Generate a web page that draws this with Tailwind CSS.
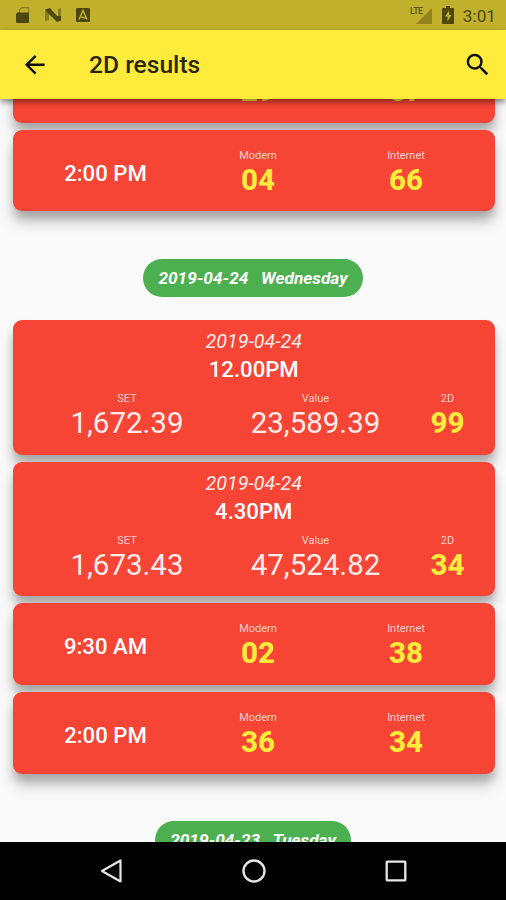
<!DOCTYPE html>
<html lang="en">
<head>
  <meta charset="UTF-8" />
  <meta name="viewport" content="width=device-width, initial-scale=1.0">
  <title>2D results</title>
  <script src="https://cdn.jsdelivr.net/npm/@tailwindcss/browser@4"></script>
</head>
<body class="bg-[#fafafa] h-[900px] flex flex-col overflow-hidden font-['Roboto',sans-serif]">
  <!-- status bar -->
  <div class="h-[30px] shrink-0 bg-[#c0b02c] flex items-center justify-between pl-[15px] pr-[10px] text-[#4e4710]">
    <div class="flex items-center gap-[13px]">
      <svg class="w-4 h-[18px]" viewBox="0 0 16 18"><path fill="none" stroke="#8a7e20" stroke-width="1.200" d="M4.500 7V4L7 1.700h6.500V7"/><path fill="currentColor" d="M4 6.500L3 6 1 8v8q0 1 1 1h11q1 0 1-1V6.500z"/></svg>
      <svg class="w-[19px] h-[18px]" viewBox="0 0 19 18"><path fill="currentColor" fill-opacity=".5" d="M1 4l4 1v9l-4 1zM14 3l3-1v12l-3 1z"/><path fill="currentColor" d="M1 3.500l5-1.500 7 8h4v4.500l-4 1.500-8-8z"/></svg>
      <svg class="w-[14px] h-[18px]" viewBox="0 0 14 18"><path fill="currentColor" d="M1 2h12q1 0 1 1v12q0 1-1 1H1q-1 0-1-1V3q0-1 1-1z"/><path fill="none" stroke="#c0b02c" stroke-width="1.500" d="M3 13.500L7 4.500l4 9M5 11l5 1"/></svg>
    </div>
    <div class="flex items-center">
      <svg class="w-[22px] h-[20px] mr-[10px]" viewBox="0 0 22 20"><path fill="#91841e" d="M22 3v16H6z"/><text x="0" y="9" font-size="9" font-weight="500" letter-spacing="-.6" fill="#5e5514" stroke="#c0b02c" stroke-width="2" paint-order="stroke">LTE</text></svg>
      <svg class="w-3 h-[18px] mr-[9px]" viewBox="0 0 12 18"><path fill="currentColor" d="M4 0h4v2h3q1 0 1 1v14q0 1-1 1H1q-1 0-1-1V3q0-1 1-1h3z"/><path fill="#c0b02c" d="M7 4.500L3 10.500h2.500v5L9.500 9H7z"/></svg>
      <span class="text-[17.2px] leading-[30px] pt-[2px]">3:01</span>
    </div>
  </div>

  <!-- app bar -->
  <header class="h-[69px] shrink-0 relative z-10 bg-[#ffeb3b] flex items-center pl-[20px] pr-[14px] shadow-[0_3px_6px_rgba(0,0,0,0.45)]">
    <svg class="w-[29.5px] h-[29.5px]" viewBox="0 0 24 24" fill="#111"><path d="M20 11H7.830l5.590-5.590L12 4l-8 8 8 8 1.410-1.410L7.830 13H20v-2z"/></svg>
    <h1 class="ml-[39.5px] pt-[1px] text-[24.6px] font-medium text-[#2b280a]">2D results</h1>
    <svg class="w-[29.5px] h-[29.5px] ml-auto" viewBox="0 0 24 24" fill="#111"><path d="M15.500 14h-.790l-.280-.270A6.471 6.471 0 0 0 16 9.500 6.500 6.500 0 1 0 9.500 16c1.610 0 3.090-.590 4.230-1.570l.270.280v.790l5 4.990L20.490 19l-4.990-5zm-6 0C7.010 14 5 11.990 5 9.500S7.010 5 9.500 5 14 7.010 14 9.500 11.990 14 9.500 14z"/></svg>
  </header>

  <main id="list" class="flex-1 min-h-0 overflow-hidden flex flex-col"></main>

  <!-- navigation bar -->
  <nav class="h-[58px] shrink-0 bg-black flex items-center justify-between pl-[100px] pr-[99px]">
    <svg class="w-[23px] h-6" viewBox="0 0 23 24" fill="none" stroke="#e6e6e6" stroke-width="2.200" stroke-linejoin="round"><path d="M20.500 1.500v21L2 12z"/></svg>
    <svg class="w-6 h-6" viewBox="0 0 24 24" fill="none" stroke="#e6e6e6" stroke-width="2.400"><circle cx="12" cy="12" r="10.500"/></svg>
    <svg class="w-[22px] h-[22px]" viewBox="0 0 22 22" fill="none" stroke="#e6e6e6" stroke-width="2.300"><rect x="1.700" y="1.700" width="18.600" height="18.600" rx=".5"/></svg>
  </nav>

  <script>
    const groups = [
      {
        rows: [
          { time: "9:30 AM", modern: "29", internet: "67" },
          { time: "2:00 PM", modern: "04", internet: "66" }
        ]
      },
      {
        date: "2019-04-24",
        day: "Wednesday",
        rows: [
          { date: "2019-04-24", time: "12.00PM", set: "1,672.39", value: "23,589.39", result: "99" },
          { date: "2019-04-24", time: "4.30PM", set: "1,673.43", value: "47,524.82", result: "34" },
          { time: "9:30 AM", modern: "02", internet: "38" },
          { time: "2:00 PM", modern: "36", internet: "34" }
        ]
      },
      { date: "2019-04-23", day: "Tuesday", rows: [] }
    ];

    const cardClass = "shrink-0 rounded-[9px] bg-[#f64435] text-white shadow-[0_8px_10px_-1px_rgba(0,0,0,0.22),0_12px_16px_0px_rgba(0,0,0,0.16)]";

    const cell = (label, value, style) => `
      <div class="text-center">
        <div class="pt-px text-[11px] leading-[14px] text-white/75">${label}</div>
        <div class="-mt-px text-[29.5px] leading-9 ${style}">${value}</div>
      </div>`;

    const plain = "text-white/90";
    const lucky = "font-extrabold text-[#ffeb3b]";

    const modernCard = r => `
      <div class="${cardClass} h-[81.7px] pt-[18px] grid grid-cols-[185px_120px_176px]">
        <div class="text-center text-[22.15px] leading-[51px] font-medium">${r.time}</div>
        ${cell("Modern", r.modern, lucky)}
        ${cell("Internet", r.internet, lucky)}
      </div>`;

    const setCard = r => `
      <div class="${cardClass} h-[134.5px] pt-[9px]">
        <div class="text-center text-[19.7px] leading-[26px] italic text-white/90">${r.date}</div>
        <div class="text-center text-[22.15px] leading-[29px] font-medium">${r.time}</div>
        <div class="mt-[7px] pl-8 grid grid-cols-[164px_213px_51px]">
          ${cell("SET", r.set, plain)}
          ${cell("Value", r.value, plain)}
          ${cell("2D", r.result, lucky)}
        </div>
      </div>`;

    document.getElementById("list").innerHTML = groups.map(g => `
      <section class="shrink-0 flex flex-col ${g.date ? "mt-[47.3px]" : "-mt-[58px]"}">
        ${g.date ? `<div class="self-center h-[38.5px] px-[15px] mb-[23px] rounded-full bg-[#4caf50] text-white text-[17.25px] leading-[39px] font-bold italic whitespace-pre">${g.date}   ${g.day}</div>` : ""}
        <div class="flex flex-col gap-[7px] pl-[13px] pr-[11.5px]">${g.rows.map(r => r.set ? setCard(r) : modernCard(r)).join("")}</div>
      </section>`).join("");
  </script>
</body>
</html>
